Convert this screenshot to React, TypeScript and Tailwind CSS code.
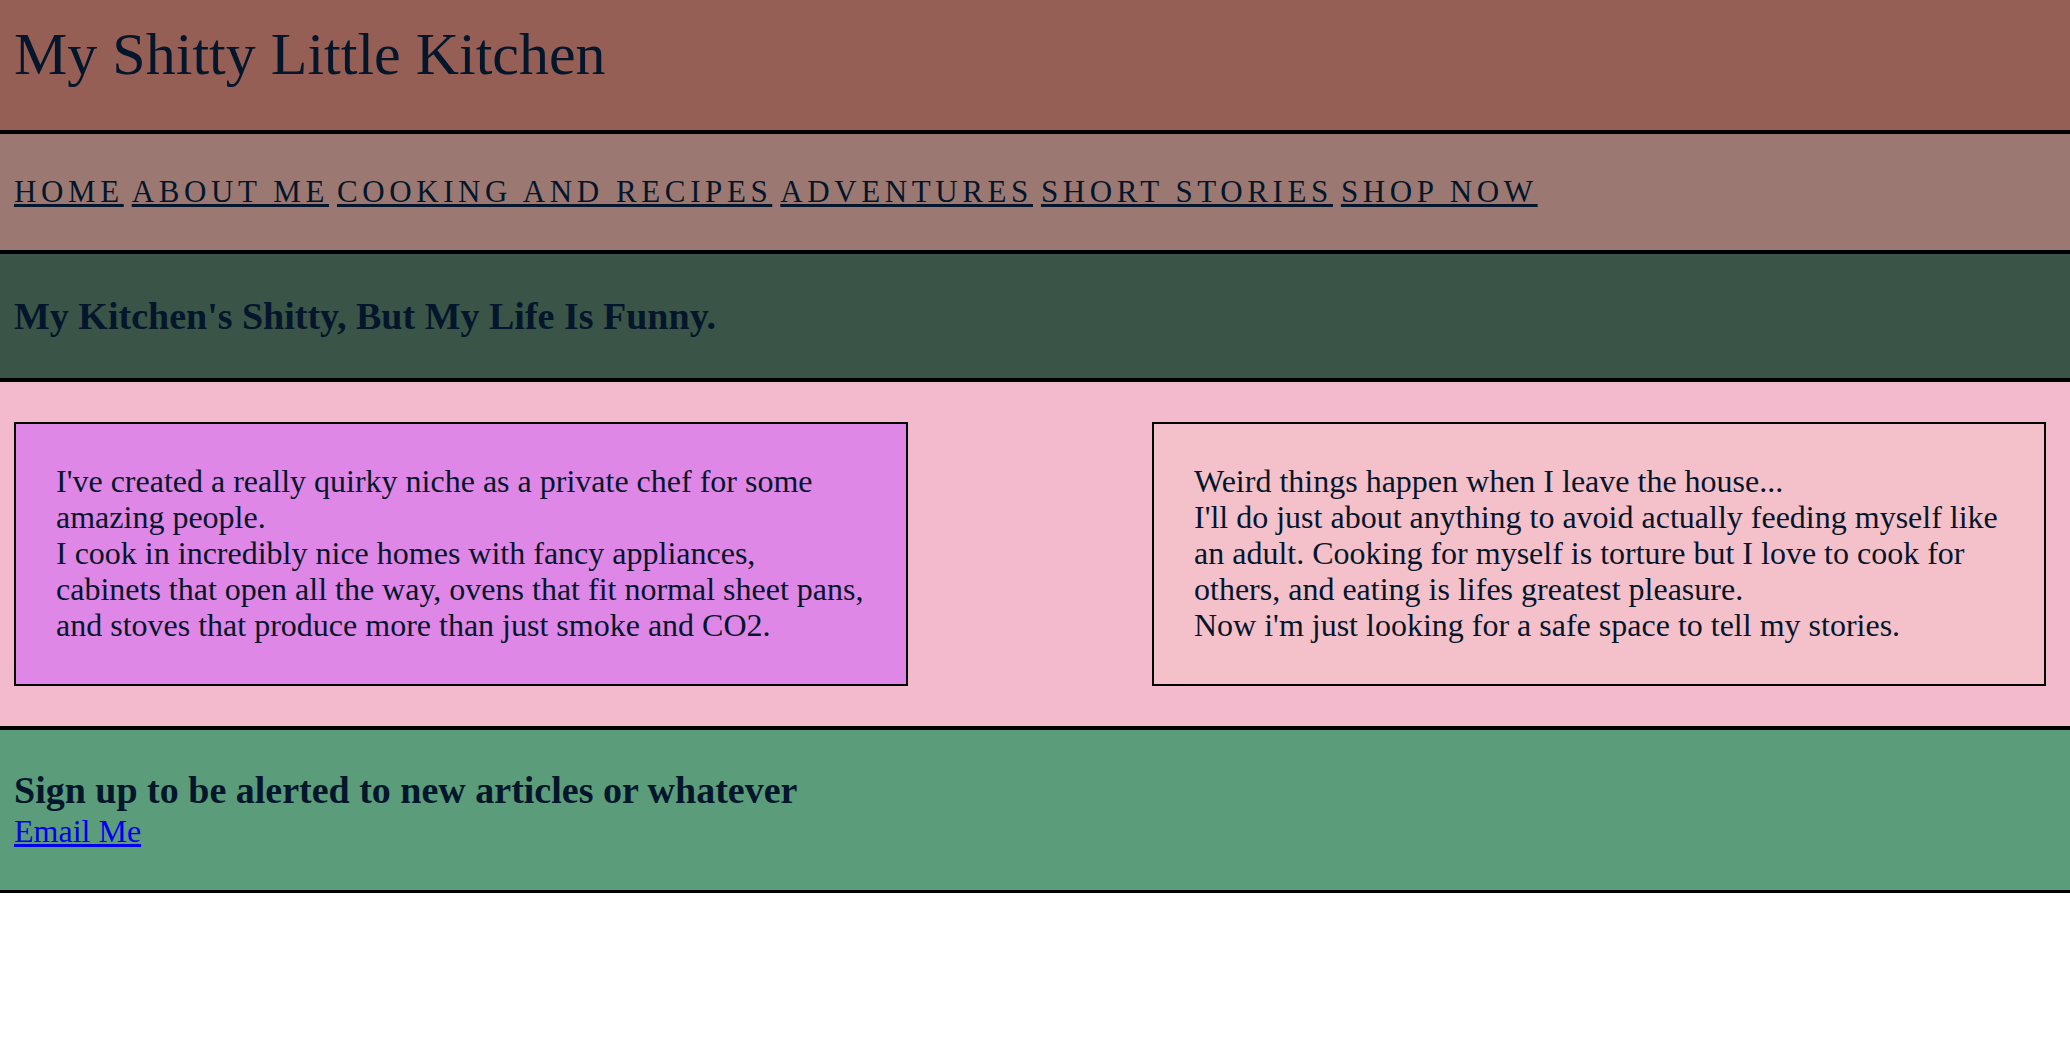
const navLinks = [
  "HOME",
  "ABOUT ME",
  "COOKING AND RECIPES",
  "ADVENTURES",
  "SHORT STORIES",
  "SHOP NOW",
];

export default function App() {
  return (
    <div className="min-h-screen bg-white font-['Liberation_Serif','Times_New_Roman',serif] text-[#04162b]">
      <header className="border-b-4 border-black bg-[#965f55] px-[14px] pb-[46px] pt-[24px]">
        <h1 className="text-[60px] font-normal leading-[60px]">My Shitty Little Kitchen</h1>
      </header>

      <nav className="flex gap-2 border-b-4 border-black bg-[#9b7972] px-[14px] pb-[43px] pt-[42px]">
        {navLinks.map((item) => (
          <a key={item} href="#" className="text-[31px] leading-[31px] tracking-[4.6px] underline">
            {item}
          </a>
        ))}
      </nav>

      <section className="flex h-[128px] items-center border-b-4 border-black bg-[#3a5447] px-[14px]">
        <h2 className="text-[38px] font-bold leading-[38px]">
          My Kitchen's Shitty, But My Life Is Funny.
        </h2>
      </section>

      <section className="flex justify-between border-b-4 border-black bg-[#f3bacd] py-[40px] pl-[14px] pr-[24px] text-[32px] leading-[36px]">
        <div className="w-[894px] border-2 border-black bg-[#df87e6] pb-[41px] pl-[40px] pr-[24px] pt-[39px]">
          <p>
            I've created a really quirky niche as a private chef for some
            <br />
            amazing people.
            <br />
            I cook in incredibly nice homes with fancy appliances,
            <br />
            cabinets that open all the way, ovens that fit normal sheet pans,
            <br />
            and stoves that produce more than just smoke and CO2.
          </p>
        </div>
        <div className="w-[894px] border-2 border-black bg-[#f4c1cb] pb-[41px] pl-[40px] pr-[24px] pt-[39px]">
          <p>
            Weird things happen when I leave the house...
            <br />
            I'll do just about anything to avoid actually feeding myself like
            <br />
            an adult. Cooking for myself is torture but I love to cook for
            <br />
            others, and eating is lifes greatest pleasure.
            <br />
            Now i'm just looking for a safe space to tell my stories.
          </p>
        </div>
      </section>

      <footer className="border-b-[3px] border-black bg-[#5b9c7a] px-[14px] pb-[40px] pt-[39px]">
        <h3 className="text-[38px] font-bold leading-[43px]">
          Sign up to be alerted to new articles or whatever
        </h3>
        <a href="#" className="block w-fit text-[32px] leading-[38px] text-[#0000ee] underline">
          Email Me
        </a>
      </footer>
    </div>
  );
}
